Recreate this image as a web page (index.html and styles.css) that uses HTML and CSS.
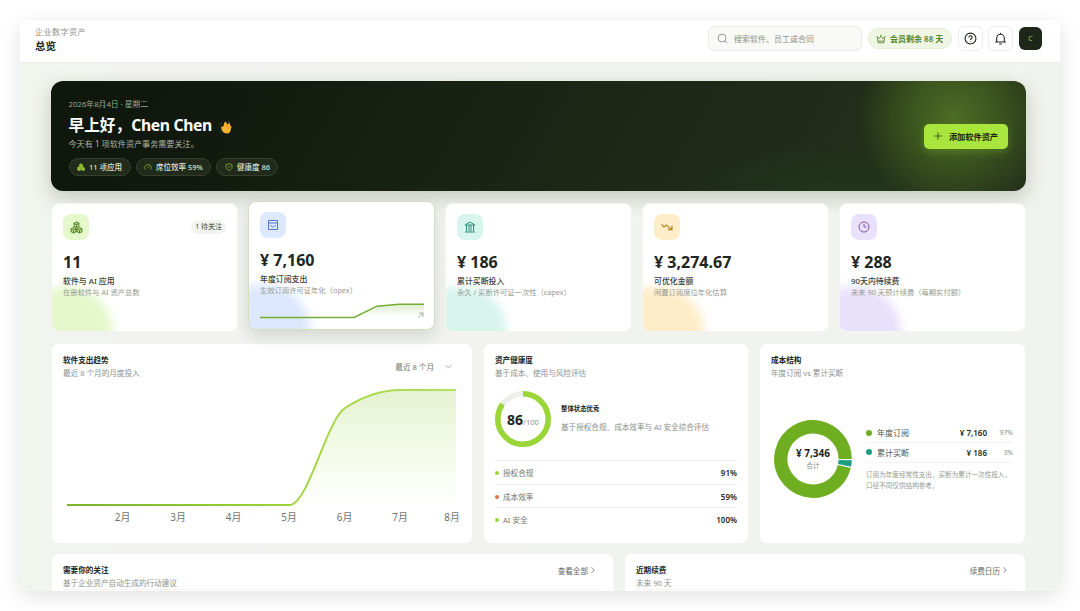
FILE: index.html
```html
<!DOCTYPE html>
<html lang="zh-CN">
<head>
    <meta charset="UTF-8">
    <meta name="viewport" content="width=device-width, initial-scale=1.0">
    <title>企业数字资产 - 总览</title>
    <link rel="stylesheet" href="styles.css">
</head>
<body>

    <div class="window">
        <header class="topbar">
            <div class="crumbs">
                <div class="crumb">企业数字资产</div>
                <div class="page-title">总览</div>
            </div>
            <div class="search">
                <svg class="icon" width="11" height="11" viewBox="0 0 24 24"><circle cx="11" cy="11" r="8.500"/><path d="M17 17l5 5"/></svg>
                <span>搜索软件、员工或合同</span>
            </div>
            <div class="member">
                <svg class="icon" width="10" height="10" viewBox="0 0 24 24"><path d="M3 8l5 3 4-6 4 6 5-3-2 13H5zM5 17h14"/><path d="M10 3h4M1 6h3M20 6h3"/></svg>
                <span>会员剩余 88 天</span>
            </div>
            <div class="icon-btn">
                <svg class="icon" width="13" height="13" viewBox="0 0 24 24"><circle cx="12" cy="12" r="10"/><path d="M9 10a3 3 0 1 1 4.500 2.500c-1 .6-1.500 1-1.500 2.200M12 17v1.200"/></svg>
            </div>
            <div class="icon-btn">
                <svg class="icon" width="13" height="13" viewBox="0 0 24 24"><path d="M2 18.500h20M5 18v-7a7 7 0 0 1 14 0v7M12 4V1.500M9.500 22h5"/></svg>
            </div>
            <div class="avatar">C</div>
        </header>

        <main class="content">
            <section class="hero">
                <div class="hero-text">
                    <div class="date">2026年8月4日 · 星期二</div>
                    <h1>早上好，<span>Chen Chen</span>
                        <svg class="wave" width="13" height="14" viewBox="0 0 26 28"><path d="M4 13l4 1 3-9c1-2 4-2 4 0l1 4 3-2c2-1 4 0 3 3l2 2c1 2 1 3 0 5l-1 5c-2 5-7 6-11 4-4-1-8-7-8-13z" fill="#fbb433"/><path d="M15 9l-2 6M19 9l-3 7M22 12l-3 6" stroke="#e58b1d" stroke-width="1"/><path d="M1 9l4-3M3 22l3 3M18 3l4 1" stroke="#397da5" stroke-width="1.200"/></svg>
                    </h1>
                    <p>今天有 1 项软件资产事务需要关注。</p>
                    <div class="chips">
                        <span class="chip"><svg class="icon" width="8" height="8" viewBox="0 0 24 24"><g fill="#8fbd27"><path d="M12 2l5 3v6l-5 3-5-3V5zM6 12l5 3v6l-5 2-5-3v-6zM18 12l5 3v6l-5 2-5-3v-6z"/></g></svg>11 项应用</span>
                        <span class="chip"><svg class="icon" width="8" height="8" viewBox="0 0 24 24"><path d="M4 20a10 10 0 1 1 16 0M12 15l4-6"/></svg>席位效率 59%</span>
                        <span class="chip"><svg class="icon" width="8" height="8" viewBox="0 0 24 24"><path d="M12 2l9 3v8c0 5-4 7-9 9-5-2-9-4-9-9V5zM8 11l3 3 5-5"/></svg>健康度 86</span>
                    </div>
                </div>
                <button class="add-btn">
                    <svg class="icon" width="8" height="8" viewBox="0 0 24 24"><path d="M12 1v22M1 12h22"/></svg>
                    添加软件资产
                </button>
            </section>

            <section class="stats">
                <div class="stat green">
                    <div class="stat-top">
                        <div class="stat-icon"><svg class="icon" width="13" height="13" viewBox="0 0 24 24"><path d="M12 2l4.500 2.500v5L12 12 7.500 9.500v-5zM6.500 12l4.500 2.500v5L6.500 22 2 19.500v-5zM17.500 12l4.500 2.500v5L17.500 22 13 19.500v-5zM7.500 4.500L12 7l4.500-2.500M12 7v5M2 14.500L6.500 17l4.500-2.500M6.500 17v5M13 14.500l4.500 2.500 4.500-2.500M17.500 17v5"/></svg></div>
                        <span class="badge">1 待关注</span>
                    </div>
                    <div class="stat-value">11</div>
                    <div class="stat-label">软件与 AI 应用</div>
                    <div class="stat-desc">在册软件与 AI 资产总数</div>
                </div>
                <div class="stat blue active">
                    <div class="stat-top">
                        <div class="stat-icon"><svg class="icon" width="12" height="12" viewBox="0 0 24 24"><path d="M3 3h18v18H3zM3 8h18M7 12c2 5 8 5 10 0"/></svg></div>
                    </div>
                    <div class="stat-value">¥ 7,160</div>
                    <div class="stat-label">年度订阅支出</div>
                    <div class="stat-desc">生效订阅许可证年化（opex）</div>
                    <svg class="spark" width="164" height="18" viewBox="0 0 164 18">
                        <defs>
                            <linearGradient id="sparkFill" x1="0" y1="0" x2="0" y2="1"><stop offset="0" stop-color="#6eae2c" stop-opacity=".22"/><stop offset="1" stop-color="#6eae2c" stop-opacity="0"/></linearGradient>
                        </defs>
                        <path d="M0 15.500H94L117 4l22-2h25v13.500z" fill="url(#sparkFill)"/>
                        <path d="M0 15.500H94L117 4.200l22-2h25" fill="none" stroke="#73ad35" stroke-width="1.400"/>
                        <path d="M158.500 15.500l4.500-4.500M159 11h4v4" fill="none" stroke="#8a9086" stroke-width=".7"/>
                    </svg>
                </div>
                <div class="stat teal">
                    <div class="stat-top">
                        <div class="stat-icon"><svg class="icon" width="12" height="12" viewBox="0 0 24 24"><path d="M2 8l10-6 10 6zM5 8v13M10 8v13M14 8v13M19 8v13M2 22h20"/></svg></div>
                    </div>
                    <div class="stat-value">¥ 186</div>
                    <div class="stat-label">累计买断投入</div>
                    <div class="stat-desc">永久 / 买断许可证一次性（capex）</div>
                </div>
                <div class="stat amber">
                    <div class="stat-top">
                        <div class="stat-icon"><svg class="icon" width="12" height="12" viewBox="0 0 24 24"><path stroke-width="2.500" d="M1 7l5 5 5-4 10 9M22 9v8h-8"/></svg></div>
                    </div>
                    <div class="stat-value">¥ 3,274.67</div>
                    <div class="stat-label">可优化金额</div>
                    <div class="stat-desc">闲置订阅席位年化估算</div>
                </div>
                <div class="stat purple">
                    <div class="stat-top">
                        <div class="stat-icon"><svg class="icon" width="12" height="12" viewBox="0 0 24 24"><circle cx="12" cy="12" r="10"/><path d="M12 6v6h5"/></svg></div>
                    </div>
                    <div class="stat-value">¥ 288</div>
                    <div class="stat-label">90天内待续费</div>
                    <div class="stat-desc">未来 90 天预计续费（每期实付额）</div>
                </div>
            </section>

            <section class="panels">
                <div class="panel">
                    <div class="panel-head">
                        <div>
                            <h2>软件支出趋势</h2>
                            <div class="sub">最近 8 个月的月度投入</div>
                        </div>
                        <div class="select">最近 8 个月
                            <svg class="icon" width="7" height="7" viewBox="0 0 24 24"><path d="M2 7l10 10L22 7"/></svg>
                        </div>
                    </div>
                    <svg class="trend" width="400" height="145" viewBox="0 0 400 145">
                        <defs>
                            <linearGradient id="trendFill" x1="0" y1="0" x2="0" y2="1"><stop offset="0" stop-color="#9bcb55" stop-opacity=".27"/><stop offset="1" stop-color="#a8e63d" stop-opacity="0"/></linearGradient>
                            <linearGradient id="trendLine" gradientUnits="userSpaceOnUse" x1="4" y1="0" x2="393" y2="0"><stop offset="0" stop-color="#79b52b"/><stop offset=".6" stop-color="#9fd43a"/><stop offset="1" stop-color="#b4e060"/></linearGradient>
                        </defs>
                        <path d="M4 124H226.500C245 124 263.500 39 282 27C300.500 15 319 9 337.500 9H393V124z" fill="url(#trendFill)"/>
                        <path d="M4 124H226.500C245 124 263.500 39 282 27C300.500 15 319 9 337.500 9H393" fill="none" stroke="url(#trendLine)" stroke-width="1.900"/>
                        <g class="months">
                            <text x="59.500" y="140">2月</text>
                            <text x="115" y="140">3月</text>
                            <text x="170.500" y="140">4月</text>
                            <text x="226" y="140">5月</text>
                            <text x="281.500" y="140">6月</text>
                            <text x="337" y="140">7月</text>
                            <text x="389" y="140">8月</text>
                        </g>
                    </svg>
                </div>

                <div class="panel">
                    <h2>资产健康度</h2>
                    <div class="sub">基于成本、使用与风险评估</div>
                    <div class="health">
                        <div class="gauge">
                            <svg width="56" height="56" viewBox="0 0 56 56">
                                <g fill="none" stroke-width="5.600" transform="rotate(-90 28 28)">
                                    <circle cx="28" cy="28" r="25.200" stroke="#eeefec"/>
                                    <circle cx="28" cy="28" r="25.200" stroke="#9bd639" pathLength="100" stroke-dasharray="85 100"/>
                                </g>
                            </svg>
                            <div class="gauge-text"><b>86</b><span>/100</span></div>
                        </div>
                        <div class="health-text">
                            <div class="health-title">整体状态优秀</div>
                            <div class="health-sub">基于授权合规、成本效率与 AI 安全综合评估</div>
                        </div>
                    </div>
                    <ul class="scores">
                        <li><i class="dot"></i><span>授权合规</span><b>91%</b></li>
                        <li><i class="dot red"></i><span>成本效率</span><b>59%</b></li>
                        <li><i class="dot"></i><span>AI 安全</span><b>100%</b></li>
                    </ul>
                </div>

                <div class="panel">
                    <h2>成本结构</h2>
                    <div class="sub">年度订阅 vs 累计买断</div>
                    <div class="cost">
                        <div class="donut">
                            <svg width="78" height="78" viewBox="0 0 78 78">
                                <g fill="none" stroke-width="13.300">
                                    <circle cx="39" cy="39" r="32.200" stroke="#6eae20" pathLength="360" stroke-dasharray="346.500 360" transform="rotate(13.500 39 39)"/>
                                    <circle cx="39" cy="39" r="32.200" stroke="#1f9d84" pathLength="360" stroke-dasharray="9.500 360" transform="rotate(2 39 39)"/>
                                </g>
                            </svg>
                            <div class="donut-text"><b>¥ 7,346</b><span>合计</span></div>
                        </div>
                        <div class="legend">
                            <div class="legend-row"><i></i><span>年度订阅</span><b>¥ 7,160</b><em>97%</em></div>
                            <div class="legend-row"><i class="teal-dot"></i><span>累计买断</span><b>¥ 186</b><em>3%</em></div>
                            <p>订阅为年度经常性支出，买断为累计一次性投入，口径不同仅供结构参考。</p>
                        </div>
                    </div>
                </div>
            </section>

            <section class="lists">
                <div class="panel">
                    <div class="panel-head">
                        <div>
                            <h2>需要你的关注</h2>
                            <div class="sub">基于企业资产自动生成的行动建议</div>
                        </div>
                        <a class="more">查看全部<svg class="icon" width="6" height="6" viewBox="0 0 24 24"><path d="M6 1l11 11L6 23"/></svg></a>
                    </div>
                    <div class="line"></div>
                </div>
                <div class="panel">
                    <div class="panel-head">
                        <div>
                            <h2>近期续费</h2>
                            <div class="sub">未来 90 天</div>
                        </div>
                        <a class="more">续费日历<svg class="icon" width="6" height="6" viewBox="0 0 24 24"><path d="M6 1l11 11L6 23"/></svg></a>
                    </div>
                    <div class="line"></div>
                </div>
            </section>
        </main>
    </div>

</body>
</html>
```

FILE: styles.css
```css
* {
    box-sizing: border-box;
}

body {
    margin: 0;
    padding: 20px;
    height: 611px;
    overflow: hidden;
    background: #fff;
    font-family: "Noto Sans", "Noto Sans CJK SC", sans-serif;
    font-size: 8px;
    color: #20251e;
}

h1, h2, p, ul {
    margin: 0;
    padding: 0;
}

.icon {
    flex: none;
    fill: none;
    stroke: currentColor;
    stroke-width: 2;
}

.window {
    width: 1040px;
    height: 571px;
    border-radius: 8px;
    overflow: hidden;
    background: linear-gradient(90deg, #f1f5ee, #f2f3f0 10%, #f1f3ee);
    box-shadow: 0 5px 20px rgba(0, 0, 0, 0.12);
}

/* Top bar */
.topbar {
    display: flex;
    align-items: center;
    height: 43px;
    padding: 0 18px 5px 15px;
    background: #fff;
    border-bottom: 1px solid #e9ebe6;
}

.crumbs {
    margin-right: auto;
    padding-top: 3px;
}

.crumb {
    font-size: 8px;
    line-height: 12px;
    letter-spacing: 0.5px;
    color: #8d938a;
}

.page-title {
    font-size: 10.5px;
    line-height: 16px;
    font-weight: 600;
}

.search {
    display: flex;
    align-items: center;
    gap: 6px;
    width: 154px;
    height: 25px;
    margin-right: 6px;
    padding: 0 8px;
    border: 1px solid #e9eae7;
    border-radius: 6px;
    background: #f9faf8;
    color: #8c9188;
}

.member {
    display: flex;
    align-items: center;
    gap: 4px;
    width: 84px;
    height: 21px;
    margin-right: 6px;
    padding-left: 7px;
    border: 1px solid #e3f0d2;
    border-radius: 11px;
    background: #eff7e4;
    color: #55822a;
    font-weight: 600;
}

.icon-btn {
    display: flex;
    align-items: center;
    justify-content: center;
    width: 25px;
    height: 25px;
    margin-right: 5px;
    border: 1px solid #eceeea;
    border-radius: 6px;
}

.avatar {
    width: 23px;
    height: 23px;
    margin-left: 1px;
    border-radius: 6px;
    background: #1e2619;
    color: #a3ce4a;
    font-size: 7px;
    line-height: 23px;
    text-align: center;
}

.content {
    padding: 18px 34px 0 31px;
}

/* Greeting banner */
.hero {
    display: flex;
    align-items: center;
    justify-content: space-between;
    height: 110px;
    padding: 0 18px 0 17.500px;
    border-radius: 12px;
    background:
        radial-gradient(circle 96px at 903px 36px, rgba(80, 116, 38, 0.9), rgba(67, 98, 32, 0.75) 45%, rgba(56, 84, 28, 0)),
        radial-gradient(ellipse 150px 45px at 780px 110px, rgba(28, 66, 32, 0.4), rgba(28, 66, 32, 0)),
        linear-gradient(120deg, #10170d 10%, #1c2716 55%, #26331b);
    box-shadow: 0 7px 20px rgba(30, 50, 20, 0.22);
}

.hero-text {
    padding-top: 2px;
}

.date {
    font-size: 7.8px;
    line-height: 12px;
    color: #9ca592;
}

.hero h1 {
    display: flex;
    align-items: center;
    margin-top: 1px;
    font-size: 15.7px;
    line-height: 28px;
    font-weight: 700;
    color: #fff;
    white-space: nowrap;
}

.hero h1 span {
    letter-spacing: -0.35px;
}

.wave {
    margin: 4px 0 0 7px;
    fill: none;
}

.hero p {
    margin-top: -1px;
    font-size: 8.1px;
    line-height: 11px;
    color: #abb3a2;
}

.chips {
    display: flex;
    gap: 5px;
    margin-top: 8.500px;
}

.chip {
    display: flex;
    align-items: center;
    gap: 4px;
    height: 18px;
    padding: 0 7.500px;
    border: 1px solid #34402c;
    border-radius: 9px;
    background: #212a1b;
    color: #dce2d5;
    font-size: 7.5px;
    font-weight: 500;
}

.chip .icon {
    color: #94c535;
}

.add-btn {
    display: flex;
    align-items: center;
    justify-content: center;
    gap: 7px;
    width: 84px;
    height: 25px;
    padding: 0;
    border: 0;
    border-radius: 5px;
    background: #a9e53d;
    box-shadow: 0 3px 8px rgba(140, 200, 50, 0.3);
    color: #1a2411;
    font-family: inherit;
    font-size: 8.2px;
    font-weight: 600;
    white-space: nowrap;
}

/* Stat cards */
.stats {
    display: grid;
    grid-template-columns: repeat(5, 1fr);
    gap: 10px;
    margin-top: 12px;
}

.stat {
    position: relative;
    height: 129px;
    padding: 10px 11px;
    border: 1px solid #f3f4f1;
    border-radius: 8px;
    overflow: hidden;
    background: #fff;
    z-index: 0;
}

/* Soft coloured blob in the lower corner */
.stat::before {
    content: "";
    position: absolute;
    left: -31px;
    bottom: -47px;
    width: 92px;
    height: 92px;
    border-radius: 50%;
    background: var(--tint);
    filter: blur(5px);
    z-index: -1;
}

.stat.active {
    transform: translateY(-2px);
    border-color: #d3dfbd;
    box-shadow: 0 7px 16px rgba(30, 40, 20, 0.13);
}

.stat-top {
    display: flex;
    align-items: center;
    justify-content: space-between;
    height: 26px;
}

.stat-icon {
    display: flex;
    align-items: center;
    justify-content: center;
    width: 26px;
    height: 26px;
    border-radius: 8px;
    background: var(--tint);
    color: var(--ink);
}

.green { --tint: #e5f8cc; --ink: #5d8a2a; }
.blue { --tint: #dce8fe; --ink: #5178c8; }
.teal { --tint: #d7f4ed; --ink: #31917c; }
.amber { --tint: #feedc8; --ink: #b98a2b; }
.purple { --tint: #e9e0fb; --ink: #8059b9; }

.badge {
    height: 14px;
    padding: 0 4px;
    border-radius: 7px;
    background: #f2f4ef;
    color: #5d6458;
    font-size: 7px;
    line-height: 14px;
    font-weight: 500;
}

.stat-value {
    margin-top: 10px;
    font-size: 16px;
    line-height: 24px;
    font-weight: 700;
}

.stat-label {
    margin-top: 1px;
    font-size: 7.9px;
    line-height: 12px;
    font-weight: 500;
    color: #3a4036;
}

.stat-desc {
    margin-top: -1px;
    font-size: 7.3px;
    line-height: 12px;
    color: #959a91;
    white-space: nowrap;
}

.spark {
    display: block;
    margin-top: 6px;
}

/* Panels */
.panels {
    display: grid;
    grid-template-columns: 422px 266px 267px;
    gap: 10px;
    margin-top: 11px;
}

.panel {
    height: 201px;
    padding: 11px;
    border: 1px solid #f3f4f1;
    border-radius: 8px;
    background: #fff;
}

.panel-head {
    display: flex;
    justify-content: space-between;
}

.panel h2 {
    margin-top: -1px;
    font-size: 7.6px;
    line-height: 12px;
    font-weight: 700;
}

.sub {
    font-size: 7.6px;
    line-height: 14px;
    color: #8d928a;
}

.select {
    display: flex;
    align-items: center;
    gap: 11px;
    height: 22px;
    padding-right: 9px;
    color: #73786f;
    font-size: 7.6px;
}

.trend {
    display: block;
    margin-top: 1px;
}

.months {
    font-size: 9.9px;
    fill: #6f746c;
    text-anchor: middle;
}

.health {
    display: flex;
    align-items: center;
    gap: 10px;
    margin-top: 11px;
    white-space: nowrap;
}

.gauge, .donut {
    display: grid;
    flex: none;
}

.gauge > *, .donut > * {
    grid-area: 1 / 1;
}

.gauge-text {
    display: flex;
    align-items: baseline;
    justify-content: center;
    align-self: center;
    padding-top: 2px;
}

.gauge-text b {
    font-size: 14px;
    line-height: 20px;
}

.gauge-text span {
    font-size: 7.6px;
    color: #91968d;
}

.health-title {
    margin-top: -3px;
    font-size: 6.4px;
    line-height: 12px;
    font-weight: 700;
}

.health-sub {
    margin-top: 6px;
    font-size: 7.6px;
    line-height: 12px;
    color: #8b9087;
}

.scores {
    margin-top: 13px;
    list-style: none;
}

.scores li {
    display: flex;
    align-items: center;
    height: 23.500px;
    padding-top: 1px;
    border-top: 1px solid #f3f4f1;
    font-size: 7.6px;
    color: #71776d;
}

.scores b {
    margin-left: auto;
    color: #252a22;
    font-size: 8px;
    font-weight: 600;
}

.dot {
    width: 4px;
    height: 4px;
    margin: 1px 4px 0 0;
    border-radius: 50%;
    background: #9bd639;
}

.dot.red {
    background: #e2714f;
}

.cost {
    display: flex;
    align-items: center;
    gap: 14px;
    height: 158px;
    padding-left: 3px;
}

.donut-text {
    display: flex;
    flex-direction: column;
    align-items: center;
    justify-content: center;
    line-height: 12px;
}

.donut-text b {
    font-size: 10px;
}

.donut-text span {
    margin-top: 1px;
    font-size: 6.8px;
    color: #8b9087;
}

.legend {
    width: 147px;
    padding-bottom: 4px;
}

.legend-row {
    display: flex;
    align-items: center;
    height: 19.500px;
    border-bottom: 1px solid #f3f4f1;
    font-size: 8px;
    color: #50564c;
}

.legend-row i {
    width: 6px;
    height: 6px;
    margin-right: 5px;
    border-radius: 50%;
    background: #6eae20;
}

.legend-row .teal-dot {
    background: #1f9d84;
}

.legend-row b {
    margin-left: auto;
    font-weight: 600;
    color: #252a22;
}

.legend-row em {
    width: 26px;
    font-size: 6.8px;
    font-style: normal;
    text-align: right;
    color: #8b9087;
}

.legend p {
    margin-top: 6px;
    font-size: 6.6px;
    line-height: 11px;
    color: #959a91;
}

/* Bottom lists */
.lists {
    display: grid;
    grid-template-columns: 563px 402px;
    gap: 10px;
    margin-top: 9px;
}

.more {
    display: flex;
    align-items: center;
    gap: 2px;
    height: 12px;
    margin-top: -1px;
    padding-right: 6px;
    font-size: 7.6px;
    color: #62685e;
}

.more .icon {
    stroke-width: 3;
}

.line {
    height: 1px;
    margin-top: -1px;
    background: #f3f4f1;
}
```
